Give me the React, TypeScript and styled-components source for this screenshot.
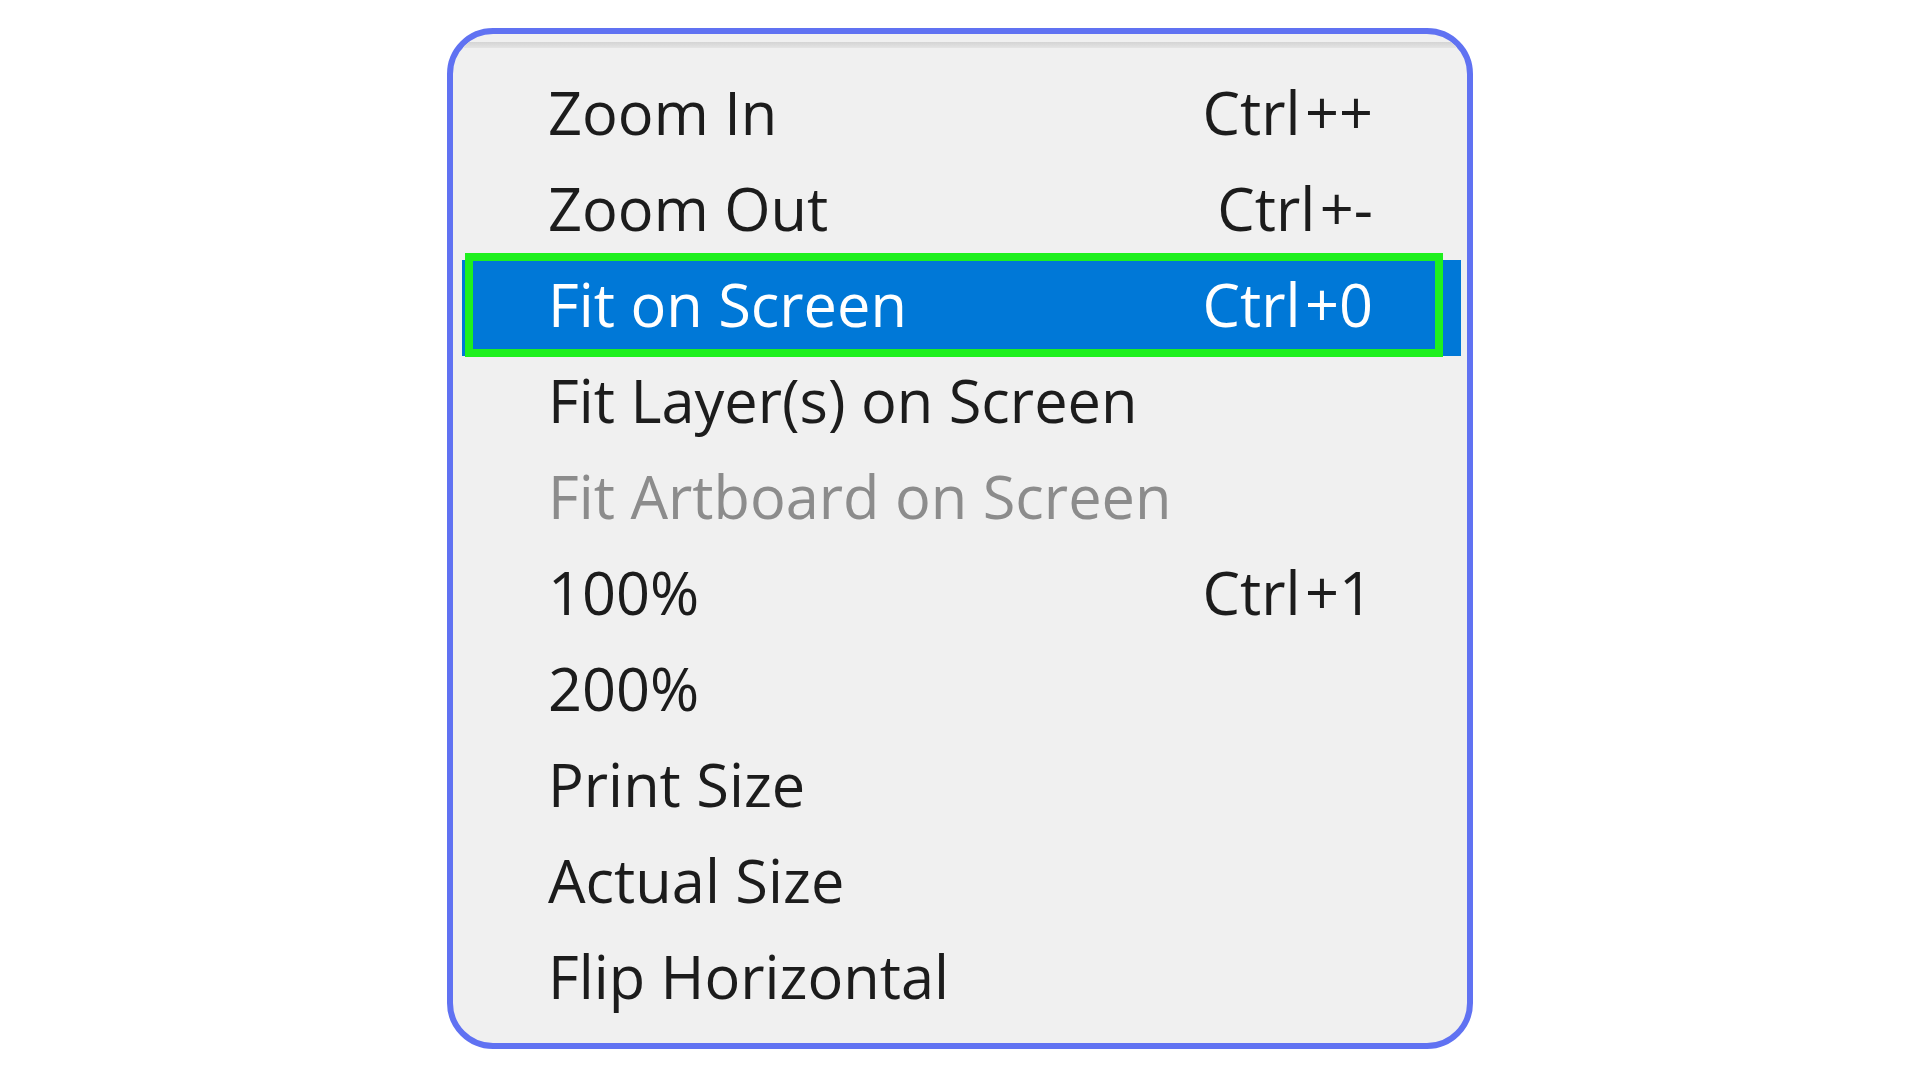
import styled, { createGlobalStyle } from 'styled-components';

const GlobalStyle = createGlobalStyle`
  html, body {
    margin: 0;
    padding: 0;
    background: #ffffff;
  }
  body {
    font-family: "Open Sans", "Noto Sans", "Liberation Sans", sans-serif;
  }
`;

type Item = {
  label: string;
  shortcut?: string;
  disabled?: boolean;
  active?: boolean;
};

const items: Item[] = [
  { label: 'Zoom In', shortcut: 'Ctrl ++' },
  { label: 'Zoom Out', shortcut: 'Ctrl +-' },
  { label: 'Fit on Screen', shortcut: 'Ctrl +0', active: true },
  { label: 'Fit Layer(s) on Screen' },
  { label: 'Fit Artboard on Screen', disabled: true },
  { label: '100%', shortcut: 'Ctrl +1' },
  { label: '200%' },
  { label: 'Print Size' },
  { label: 'Actual Size' },
  { label: 'Flip Horizontal' },
];

const App = () => {
  return (
    <>
      <GlobalStyle />
      <Page>
        <MenuPanel>
          <TopEdge />
          <MenuList>
            {items.map((item) => (
              <MenuRow key={item.label} $active={item.active} $disabled={item.disabled}>
                <Label>{item.label}</Label>
                {item.shortcut && <Shortcut>{item.shortcut}</Shortcut>}
                {item.active && <FocusMark />}
              </MenuRow>
            ))}
          </MenuList>
        </MenuPanel>
      </Page>
    </>
  );
};

const Page = styled.div`
  width: 1920px;
  height: 1080px;
  padding-top: 28px;
  box-sizing: border-box;
  overflow: hidden;
`;

const MenuPanel = styled.div`
  width: 1026px;
  margin: 0 auto;
  box-sizing: border-box;
  border: 6px solid #6072f2;
  border-radius: 46px;
  background: #f0f0f0;
  overflow: hidden;
  padding-bottom: 15px;
`;

const TopEdge = styled.div`
  height: 6px;
  margin-top: 8px;
  background: linear-gradient(#d4d4d4, #e4e4e4);
`;

const MenuList = styled.div`
  display: flex;
  flex-direction: column;
  margin: 20px 6px 0 9px;
`;

const MenuRow = styled.div<{ $active?: boolean; $disabled?: boolean }>`
  position: relative;
  display: flex;
  justify-content: space-between;
  height: 96px;
  box-sizing: border-box;
  padding: 0 88px 8px 86px;
  line-height: 88px;
  font-size: 59.5px;
  background: ${(p) => (p.$active ? '#0078d7' : 'transparent')};
  color: ${(p) => (p.$active ? '#ffffff' : p.$disabled ? '#8c8c8c' : '#1c1c1c')};
`;

const Label = styled.span`
  white-space: nowrap;
`;

const Shortcut = styled.span`
  white-space: nowrap;
  word-spacing: -11px;
`;

const FocusMark = styled.div`
  position: absolute;
  top: -7px;
  left: 3px;
  right: 18px;
  bottom: -1px;
  border: 8px solid #1ef01e;
  pointer-events: none;
`;

export default App;
